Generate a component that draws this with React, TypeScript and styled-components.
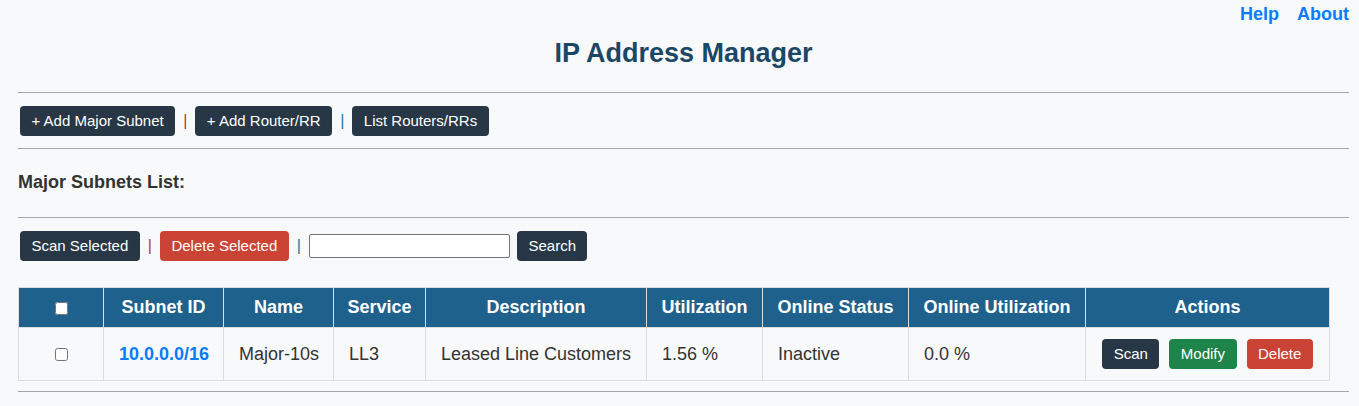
import styled, { createGlobalStyle } from "styled-components";

const GlobalStyle = createGlobalStyle`
  body {
    margin: 0;
    background: #f8f9fa;
    font-family: "Liberation Sans", Arial, sans-serif;
    color: #333;
  }
`;

const Page = styled.div`
  padding: 0 10px 0 18px;
`;

const TopLinks = styled.nav`
  display: flex;
  justify-content: flex-end;
  gap: 18px;
  padding-top: 4px;
  padding-right: 0;
`;

const TopLink = styled.a`
  font-size: 18px;
  line-height: 20px;
  font-weight: bold;
  color: #0a7cff;
  text-decoration: none;
`;

const Title = styled.h1`
  margin: 14px 0 23px;
  font-size: 27px;
  line-height: 31px;
  text-align: center;
  color: #1b4766;
`;

const Rule = styled.hr`
  margin: 0;
  border: none;
  border-top: 1px solid #a6a6a6;
`;

const Toolbar = styled.div<{ $top: number; $bottom: number }>`
  display: flex;
  align-items: center;
  gap: 8px;
  padding-left: 2px;
  margin: ${(p) => p.$top}px 0 ${(p) => p.$bottom}px;
`;

const Button = styled.button<{ $tone?: "dark" | "red" | "green" }>`
  font-family: "Liberation Sans", Arial, sans-serif;
  font-size: 15px;
  line-height: 18px;
  padding: 6px 11.5px;
  border: none;
  border-radius: 4px;
  color: #fff;
  cursor: pointer;
  background: ${(p) =>
    p.$tone === "red" ? "#cb4335" : p.$tone === "green" ? "#1e8449" : "#273746"};
`;

const Sep = styled.span<{ $color: string }>`
  font-size: 16px;
  line-height: 18px;
  color: ${(p) => p.$color};
`;

const SearchInput = styled.input`
  width: 201px;
  height: 24px;
  box-sizing: border-box;
  border: 1px solid #767676;
  border-radius: 2px;
  background: #fff;
  margin-right: -1px;
`;

const SectionTitle = styled.h3`
  margin: 23px 0 24px;
  font-size: 18px;
  line-height: 21px;
  color: #333;
`;

const Table = styled.table`
  border-collapse: collapse;
  table-layout: fixed;
  width: 1311px;
  margin-bottom: 10px;
  font-size: 18px;
`;

const Th = styled.th<{ $w: number }>`
  width: ${(p) => p.$w}px;
  height: 40px;
  padding: 0 10px;
  box-sizing: border-box;
  background: #1f618d;
  color: #fff;
  font-weight: bold;
  text-align: center;
  border: 1px solid #ddd;
  line-height: 21px;
  white-space: nowrap;
`;

const Td = styled.td<{ $center?: boolean }>`
  height: 53px;
  padding: 0 15px;
  box-sizing: border-box;
  border: 1px solid #ddd;
  color: #333;
  line-height: 21px;
  text-align: ${(p) => (p.$center ? "center" : "left")};
  white-space: nowrap;
`;

const SubnetLink = styled.a`
  color: #0a7cff;
  font-weight: bold;
  text-decoration: none;
`;

const Actions = styled.div`
  display: flex;
  justify-content: center;
  gap: 10px;
`;

const Check = styled.input`
  margin: 0;
  width: 13px;
  height: 13px;
  vertical-align: middle;
`;

const columns: [string, number][] = [
  ["", 85],
  ["Subnet ID", 120],
  ["Name", 110],
  ["Service", 92],
  ["Description", 221],
  ["Utilization", 116],
  ["Online Status", 146],
  ["Online Utilization", 177],
  ["Actions", 244],
];

export default function App() {
  return (
    <Page>
      <GlobalStyle />
      <TopLinks>
        <TopLink href="#">Help</TopLink>
        <TopLink href="#">About</TopLink>
      </TopLinks>
      <Title>IP Address Manager</Title>
      <Rule />

      <Toolbar $top={13} $bottom={12}>
        <Button>+ Add Major Subnet</Button>
        <Sep $color="#b03a2e">|</Sep>
        <Button>+ Add Router/RR</Button>
        <Sep $color="#2471a3">|</Sep>
        <Button>List Routers/RRs</Button>
      </Toolbar>
      <Rule />

      <SectionTitle>Major Subnets List:</SectionTitle>
      <Rule />

      <Toolbar $top={13} $bottom={26}>
        <Button>Scan Selected</Button>
        <Sep $color="#b03a2e">|</Sep>
        <Button $tone="red">Delete Selected</Button>
        <Sep $color="#2471a3">|</Sep>
        <SearchInput type="text" />
        <Button>Search</Button>
      </Toolbar>

      <Table>
        <thead>
          <tr>
            {columns.map(([label, w], i) => (
              <Th key={i} $w={w}>
                {i === 0 ? <Check type="checkbox" /> : label}
              </Th>
            ))}
          </tr>
        </thead>
        <tbody>
          <tr>
            <Td $center>
              <Check type="checkbox" />
            </Td>
            <Td $center>
              <SubnetLink href="#">10.0.0.0/16</SubnetLink>
            </Td>
            <Td>Major-10s</Td>
            <Td>LL3</Td>
            <Td>Leased Line Customers</Td>
            <Td>1.56 %</Td>
            <Td>Inactive</Td>
            <Td>0.0 %</Td>
            <Td>
              <Actions>
                <Button>Scan</Button>
                <Button $tone="green">Modify</Button>
                <Button $tone="red">Delete</Button>
              </Actions>
            </Td>
          </tr>
        </tbody>
      </Table>
      <Rule />
    </Page>
  );
}
